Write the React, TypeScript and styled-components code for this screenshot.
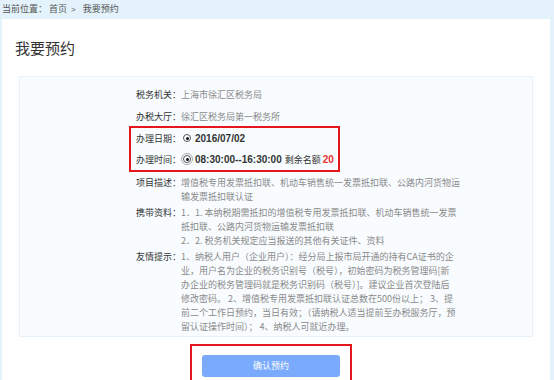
import styled, { createGlobalStyle } from 'styled-components'

const GlobalStyle = createGlobalStyle`
  html, body {
    margin: 0;
    padding: 0;
    background: #e3f2fb;
    font-family: "Noto Sans CJK SC", "Noto Sans", sans-serif;
  }
`

// line breaks follow the original page
const tips = [
  '1、纳税人用户（企业用户）：经分局上报市局开通的持有CA证书的企',
  '业，用户名为企业的税务识别号（税号），初始密码为税务管理码[新',
  '办企业的税务管理码就是税务识别码（税号）]。建议企业首次登陆后',
  '修改密码。 2、增值税专用发票抵扣联认证总数在500份以上； 3、提',
  '前二个工作日预约，当日有效；（请纳税人适当提前至办税服务厅，预',
  '留认证操作时间）； 4、纳税人可就近办理。',
]

export default function App() {
  return (
    <Page>
      <GlobalStyle />
      <Breadcrumb>
        当前位置： 首页<Sep>&gt;</Sep>我要预约
      </Breadcrumb>
      <Card>
        <Title>我要预约</Title>
        <Panel>
          <Row>
            <Label>税务机关：</Label>
            <Value>上海市徐汇区税务局</Value>
          </Row>
          <Row>
            <Label>办税大厅：</Label>
            <Value>徐汇区税务局第一税务所</Value>
          </Row>
          <Highlight>
            <Row $tight>
              <Label>办理日期：</Label>
              <Choice>
                <Radio />
                <Strong>2016/07/02</Strong>
              </Choice>
            </Row>
            <Row $tight>
              <Label>办理时间：</Label>
              <Choice>
                <Radio $focused />
                <Strong>08:30:00--16:30:00</Strong>
                <Remain>
                  剩余名额 <Count>20</Count>
                </Remain>
              </Choice>
            </Row>
          </Highlight>
          <TextRow $first>
            <Label>项目描述：</Label>
            <Value>增值税专用发票抵扣联、机动车销售统一发票抵扣联、公路内河货物运输发票抵扣联认证</Value>
          </TextRow>
          <TextRow>
            <Label>携带资料：</Label>
            <Value>
              <div>1．1. 本纳税期需抵扣的增值税专用发票抵扣联、机动车销售统一发票抵扣联、公路内河货物运输发票抵扣联</div>
              <div>2．2. 税务机关规定应当报送的其他有关证件、资料</div>
            </Value>
          </TextRow>
          <TextRow>
            <Label>友情提示：</Label>
            <Value>
              {tips.map((line) => (
                <Line key={line}>{line}</Line>
              ))}
            </Value>
          </TextRow>
        </Panel>
        <Footer>
          <ButtonFrame>
            <Confirm>确认预约</Confirm>
          </ButtonFrame>
        </Footer>
      </Card>
    </Page>
  )
}

const Page = styled.div`
  width: 554px;
  height: 380px;
  overflow: hidden;
  background: #e3f2fb;
`

const Breadcrumb = styled.div`
  height: 19px;
  line-height: 17px;
  padding-left: 2px;
  font-size: 9px;
  color: #555;
`

const Sep = styled.span`
  margin: 0 7px 0 4px;
  font-family: "Liberation Sans", sans-serif;
  font-size: 8px;
`

const Card = styled.div`
  margin: 0 4px 0 2px;
  height: 361px;
  background: #fff;
  padding: 18px 17px 0;
  box-sizing: border-box;
`

const Title = styled.h1`
  margin: 0 0 0 -4px;
  height: 39px;
  font-size: 15px;
  font-weight: normal;
  line-height: 21px;
  color: #333;
`

const Panel = styled.div`
  height: 261px;
  box-sizing: border-box;
  background: #f8fcff;
  border: 1px solid #e8f2fb;
  padding: 7px 68px 0 116px;
  font-size: 9px;
`

const Row = styled.div<{ $tight?: boolean }>`
  display: flex;
  line-height: ${(p) => (p.$tight ? '21px' : '22px')};
`

const TextRow = styled.div<{ $first?: boolean }>`
  display: flex;
  line-height: 14px;
  margin-top: ${(p) => (p.$first ? '4px' : '2px')};
`

const Label = styled.div`
  flex: none;
  width: 45px;
  color: #333;
`

const Value = styled.div`
  width: 284px;
  color: #8a8a8a;
`

const Line = styled.div`
  white-space: nowrap;
`

const Highlight = styled.div`
  width: fit-content;
  margin: -2px 0 0 -7px;
  padding: 0 4px 0 5px;
  border: 2px solid #e5161e;
`

const Choice = styled.div`
  display: flex;
  align-items: center;
  color: #333;
`

const Radio = styled.span<{ $focused?: boolean }>`
  position: relative;
  width: 6px;
  height: 6px;
  border: 1px solid #555;
  border-radius: 50%;
  background: #fff;
  margin: 0 4px 1px 2px;
  outline: ${(p) => (p.$focused ? '1px solid #aaa' : 'none')};
  outline-offset: 1px;

  &::after {
    content: '';
    position: absolute;
    left: 1.5px;
    top: 1.5px;
    width: 3px;
    height: 3px;
    border-radius: 50%;
    background: #111;
  }
`

const Strong = styled.span`
  font-family: "Liberation Sans", sans-serif;
  font-size: 10px;
  font-weight: bold;
  color: #333;
`

const Remain = styled.span`
  margin-left: 3px;
  color: #333;
`

const Count = styled.span`
  font-family: "Liberation Sans", sans-serif;
  font-size: 10px;
  font-weight: bold;
  color: #e8312e;
`

const Footer = styled.div`
  display: flex;
  justify-content: center;
  padding: 7px 10px 0 0;
`

const ButtonFrame = styled.div`
  padding: 4px 10px;
  border: 2px solid #e5161e;
`

const Confirm = styled.button`
  width: 138px;
  height: 22px;
  border: none;
  border-radius: 3px;
  background: #79aafb;
  color: #fff;
  font-family: inherit;
  font-size: 9px;
  cursor: pointer;
`
